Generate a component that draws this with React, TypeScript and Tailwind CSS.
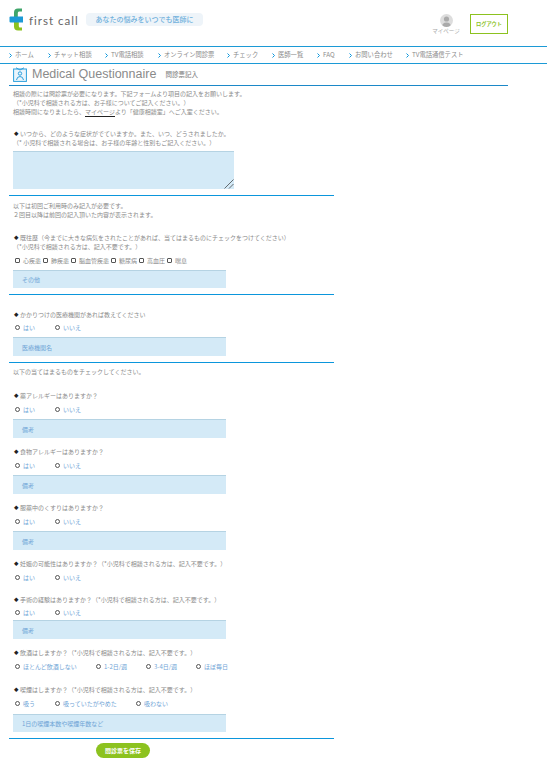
const jp = "font-['Noto_Sans_CJK_JP',sans-serif]";

const navItems = [
  { label: 'ホーム', w: 'w-[39px]' },
  { label: 'チャット相談', w: 'w-[57px]' },
  { label: 'TV電話相談', w: 'w-[53px]' },
  { label: 'オンライン問診票', w: 'w-[69px]' },
  { label: 'チェック', w: 'w-[45px]' },
  { label: '医師一覧', w: 'w-[45px]' },
  { label: 'FAQ', w: 'w-[32px]' },
  { label: 'お問い合わせ', w: 'w-[57px]' },
  { label: 'TV電話通信テスト', w: 'w-[70px]' },
];

function Logo() {
  return (
    <svg width="14" height="23" viewBox="0 0 14 23" className="shrink-0">
      <path d="M5 9 V4.5 Q5 0.5 9 0.5 H13 V3.5 H10 Q8.8 3.5 8.8 5 V9 Z" fill="#3fa56a" />
      <path d="M5 14 H9.8 V18 Q9.8 19.5 11 19.5 H13 V22.5 H9 Q5 22.5 5 18.5 Z" fill="#8cc21f" />
      <path d="M0.5 9.5 Q0.5 8.5 1.5 8.5 H14 V14.5 H1.5 Q0.5 14.5 0.5 13.5 Z" fill="#1c9ad6" />
    </svg>
  );
}

function TitleIcon() {
  return (
    <svg width="14" height="15" viewBox="0 0 14 15" fill="none" className="shrink-0">
      <rect x="0.6" y="2" width="12.8" height="12.4" fill="#eaf5fc" stroke="#2b9fdc" strokeWidth="1" />
      <path d="M3 0.8 L7 3 L11 0.8" stroke="#2b9fdc" strokeWidth="1" />
      <circle cx="7" cy="6.5" r="1.7" stroke="#2b9fdc" strokeWidth="1" />
      <path d="M3.5 13 Q4 9.5 7 9.5 Q10 9.5 10.5 13" stroke="#2b9fdc" strokeWidth="1" />
    </svg>
  );
}

function Divider({ className = '' }: { className?: string }) {
  return <div className={`ml-[9px] h-px w-[325px] bg-[#0b96dc] ${className}`} />;
}

function Question({ children, className = '' }: { children: React.ReactNode; className?: string }) {
  return (
    <p className={`ml-[14px] flex h-[9px] items-center whitespace-nowrap text-[6px] leading-[9px] text-[#8a8a8a] [text-spacing-trim:space-all] ${className}`}>
      <span className="w-[6px] shrink-0 text-[4.5px] leading-none text-[#222]">◆</span>
      <span>{children}</span>
    </p>
  );
}

function Note({ children, className = '' }: { children: React.ReactNode; className?: string }) {
  return <p className={`ml-[13px] whitespace-nowrap text-[6px] leading-[9px] text-[#8a8a8a] [text-spacing-trim:space-all] ${className}`}>{children}</p>;
}

function FieldBox({ text, h = 'h-[19px]', className = '' }: { text: string; h?: string; className?: string }) {
  return (
    <div className={`ml-[13px] flex w-[213px] items-center border-t border-[#b5d3e3] bg-[#d4eaf7] pl-[9px] text-[6px] text-[#6fa4d6] ${h} ${className}`}>
      {text}
    </div>
  );
}

function Radios({ options, className = '' }: { options: { label: string; w: string }[]; className?: string }) {
  return (
    <div className={`ml-[15px] flex h-[9px] items-center text-[6px] text-[#6fa4d6] ${className}`}>
      {options.map((o) => (
        <div key={o.label} className={`flex items-center gap-[3px] ${o.w}`}>
          <span className="size-[5px] shrink-0 rounded-full border border-[#555]" />
          <span className="whitespace-nowrap">{o.label}</span>
        </div>
      ))}
    </div>
  );
}

const yesNo = [
  { label: 'はい', w: 'w-[40px]' },
  { label: 'いいえ', w: 'w-[40px]' },
];

const diseases = ['心疾患', '肺疾患', '脳血管疾患', '糖尿病', '高血圧', '喘息'];

function AllergyBlock({ title, className = '' }: { title: string; className?: string }) {
  return (
    <div className={className}>
      <Question>{title}</Question>
      <Radios options={yesNo} className="mt-[5px]" />
      <FieldBox text="備考" className="mt-[5px]" />
    </div>
  );
}

export default function App() {
  return (
    <div className={`h-[772px] w-[547px] overflow-hidden bg-white ${jp}`}>
      {/* ヘッダー */}
      <header className="flex h-[46px] items-start">
        <div className="mt-[8px] ml-[9px] flex w-[194px] items-center">
          <Logo />
          <span className="mt-[2px] ml-[6px] font-['Lato',sans-serif] text-[11.5px] leading-none tracking-[1px] text-[#666]">first call</span>
          <div className="ml-auto flex h-[13px] w-[117px] items-center justify-center rounded-[4px] bg-[#eef4f9] text-[7px] font-medium text-[#6fb0dc]">
            あなたの悩みをいつでも医師に
          </div>
        </div>
        <div className="mt-[14px] ml-[223px] flex w-[40px] flex-col items-center">
          <div className="flex size-[13px] items-center justify-center overflow-hidden rounded-full bg-[#ddd]">
            <svg width="13" height="13" viewBox="0 0 13 13">
              <circle cx="6.5" cy="5" r="2.6" fill="#aaa" />
              <path d="M2 13 Q2 8.5 6.5 8.5 Q11 8.5 11 13 Z" fill="#aaa" />
            </svg>
          </div>
          <span className="whitespace-nowrap text-[5.5px] leading-[8px] text-[#aaa]">マイページ</span>
        </div>
        <div className="mt-[14px] ml-[4px] flex h-[20px] w-[38px] items-center justify-center border-[1.5px] border-[#8cc21f] text-[5.2px] font-bold text-[#8cc21f]">
          ログアウト
        </div>
      </header>

      {/* グローバルナビ */}
      <nav className="flex h-[18px] items-center border-y border-[#1c9ad6] pl-[9px] text-[6.3px] text-[#8a8a8a]">
        {navItems.map((n) => (
          <div key={n.label} className={`flex shrink-0 items-center whitespace-nowrap ${n.w}`}>
            <svg width="3" height="5" viewBox="0 0 3 5" className="mr-[3px] shrink-0">
              <path d="M0.5 0.5 L2.5 2.5 L0.5 4.5" stroke="#0b96dc" strokeWidth="1" fill="none" />
            </svg>
            {n.label}
          </div>
        ))}
      </nav>

      {/* タイトル */}
      <div className="ml-[9px] flex h-[22px] w-[499px] items-center border-b border-[#1c88c8] pl-[4px]">
        <TitleIcon />
        <span className="ml-[5px] font-['Liberation_Sans',sans-serif] text-[12.5px] leading-none text-[#8a8a8a]">Medical Questionnaire</span>
        <span className="ml-[9px] text-[6.5px] font-medium text-[#8a8a8a]">問診票記入</span>
      </div>

      <Note className="mt-[3px]">相談の際には問診票が必要になります。下記フォームより項目の記入をお願いします。</Note>
      <Note>（*小児科で相談される方は、お子様についてご記入ください。）</Note>
      <Note>
        相談時間になりましたら、<span className="border-b border-[#222]">マイページ</span>より「健康相談室」へご入室ください。
      </Note>

      <Question className="mt-[13px]">いつから、どのような症状がでていますか。また、いつ、どうされましたか。</Question>
      <Note>（* 小児科で相談される場合は、お子様の年齢と性別もご記入ください。）</Note>
      <div className="relative mt-[4px] ml-[13px] h-[38px] w-[221px] border-t border-[#b5d3e3] bg-[#d4eaf7]">
        <svg width="10" height="10" viewBox="0 0 10 10" className="absolute right-0 bottom-0">
          <path d="M0.5 9.5 L9.5 0.5 M5 9.5 L9.5 5" stroke="#333" strokeWidth="0.7" />
        </svg>
      </div>
      <Divider className="mt-[6px]" />

      <Note className="mt-[5px]">以下は初回ご利用時のみ記入が必要です。</Note>
      <Note>２回目以降は前回の記入頂いた内容が表示されます。</Note>

      <Question className="mt-[14px]">既往歴（今までに大きな病気をされたことがあれば、当てはまるものにチェックをつけてください）</Question>
      <Note>（*小児科で相談される方は、記入不要です。）</Note>
      <div className="mt-[5px] ml-[15px] flex h-[9px] items-center gap-[2px] text-[6px] text-[#8a8a8a]">
        {diseases.map((d) => (
          <div key={d} className="flex items-center gap-[3px]">
            <span className="size-[5px] shrink-0 rounded-[1px] border border-[#555]" />
            <span>{d}</span>
          </div>
        ))}
      </div>
      <FieldBox text="その他" h="h-[18px]" className="mt-[5px]" />
      <Divider className="mt-[6px]" />

      <Question className="mt-[15px]">かかりつけの医療機関があれば教えてください</Question>
      <Radios options={yesNo} className="mt-[4px]" />
      <FieldBox text="医療機関名" className="mt-[5px]" />
      <Divider className="mt-[6px]" />
      <Note className="mt-[4px]">以下の当てはまるものをチェックしてください。</Note>

      <AllergyBlock title="薬アレルギーはありますか？" className="mt-[15px]" />
      <AllergyBlock title="食物アレルギーはありますか？" className="mt-[9px]" />
      <AllergyBlock title="服薬中のくすりはありますか？" className="mt-[9px]" />

      <Question className="mt-[9px]">妊娠の可能性はありますか？（*小児科で相談される方は、記入不要です。）</Question>
      <Radios options={yesNo} className="mt-[5px]" />

      <Question className="mt-[13px]">手術の経験はありますか？（*小児科で相談される方は、記入不要です。）</Question>
      <Radios options={yesNo} className="mt-[4px]" />
      <FieldBox text="備考" className="mt-[3px]" />

      <Question className="mt-[9px]">飲酒はしますか？（*小児科で相談される方は、記入不要です。）</Question>
      <Radios
        className="mt-[5px]"
        options={[
          { label: 'ほとんど飲酒しない', w: 'w-[81px]' },
          { label: '1-2日/週', w: 'w-[50px]' },
          { label: '3-4日/週', w: 'w-[50px]' },
          { label: 'ほぼ毎日', w: 'w-[40px]' },
        ]}
      />

      <Question className="mt-[14px]">喫煙はしますか？（*小児科で相談される方は、記入不要です。）</Question>
      <Radios
        className="mt-[5px]"
        options={[
          { label: '吸う', w: 'w-[40px]' },
          { label: '吸っていたがやめた', w: 'w-[81px]' },
          { label: '吸わない', w: 'w-[40px]' },
        ]}
      />
      <FieldBox text="1日の喫煙本数や喫煙年数など" h="h-[18px]" className="mt-[6px]" />
      <Divider className="mt-[6px]" />

      <button className="mt-[4px] ml-[96px] flex h-[15px] w-[54px] items-center justify-center rounded-full bg-[#8cc21f] text-[6px] font-bold text-white">
        問診票を保存
      </button>
    </div>
  );
}
